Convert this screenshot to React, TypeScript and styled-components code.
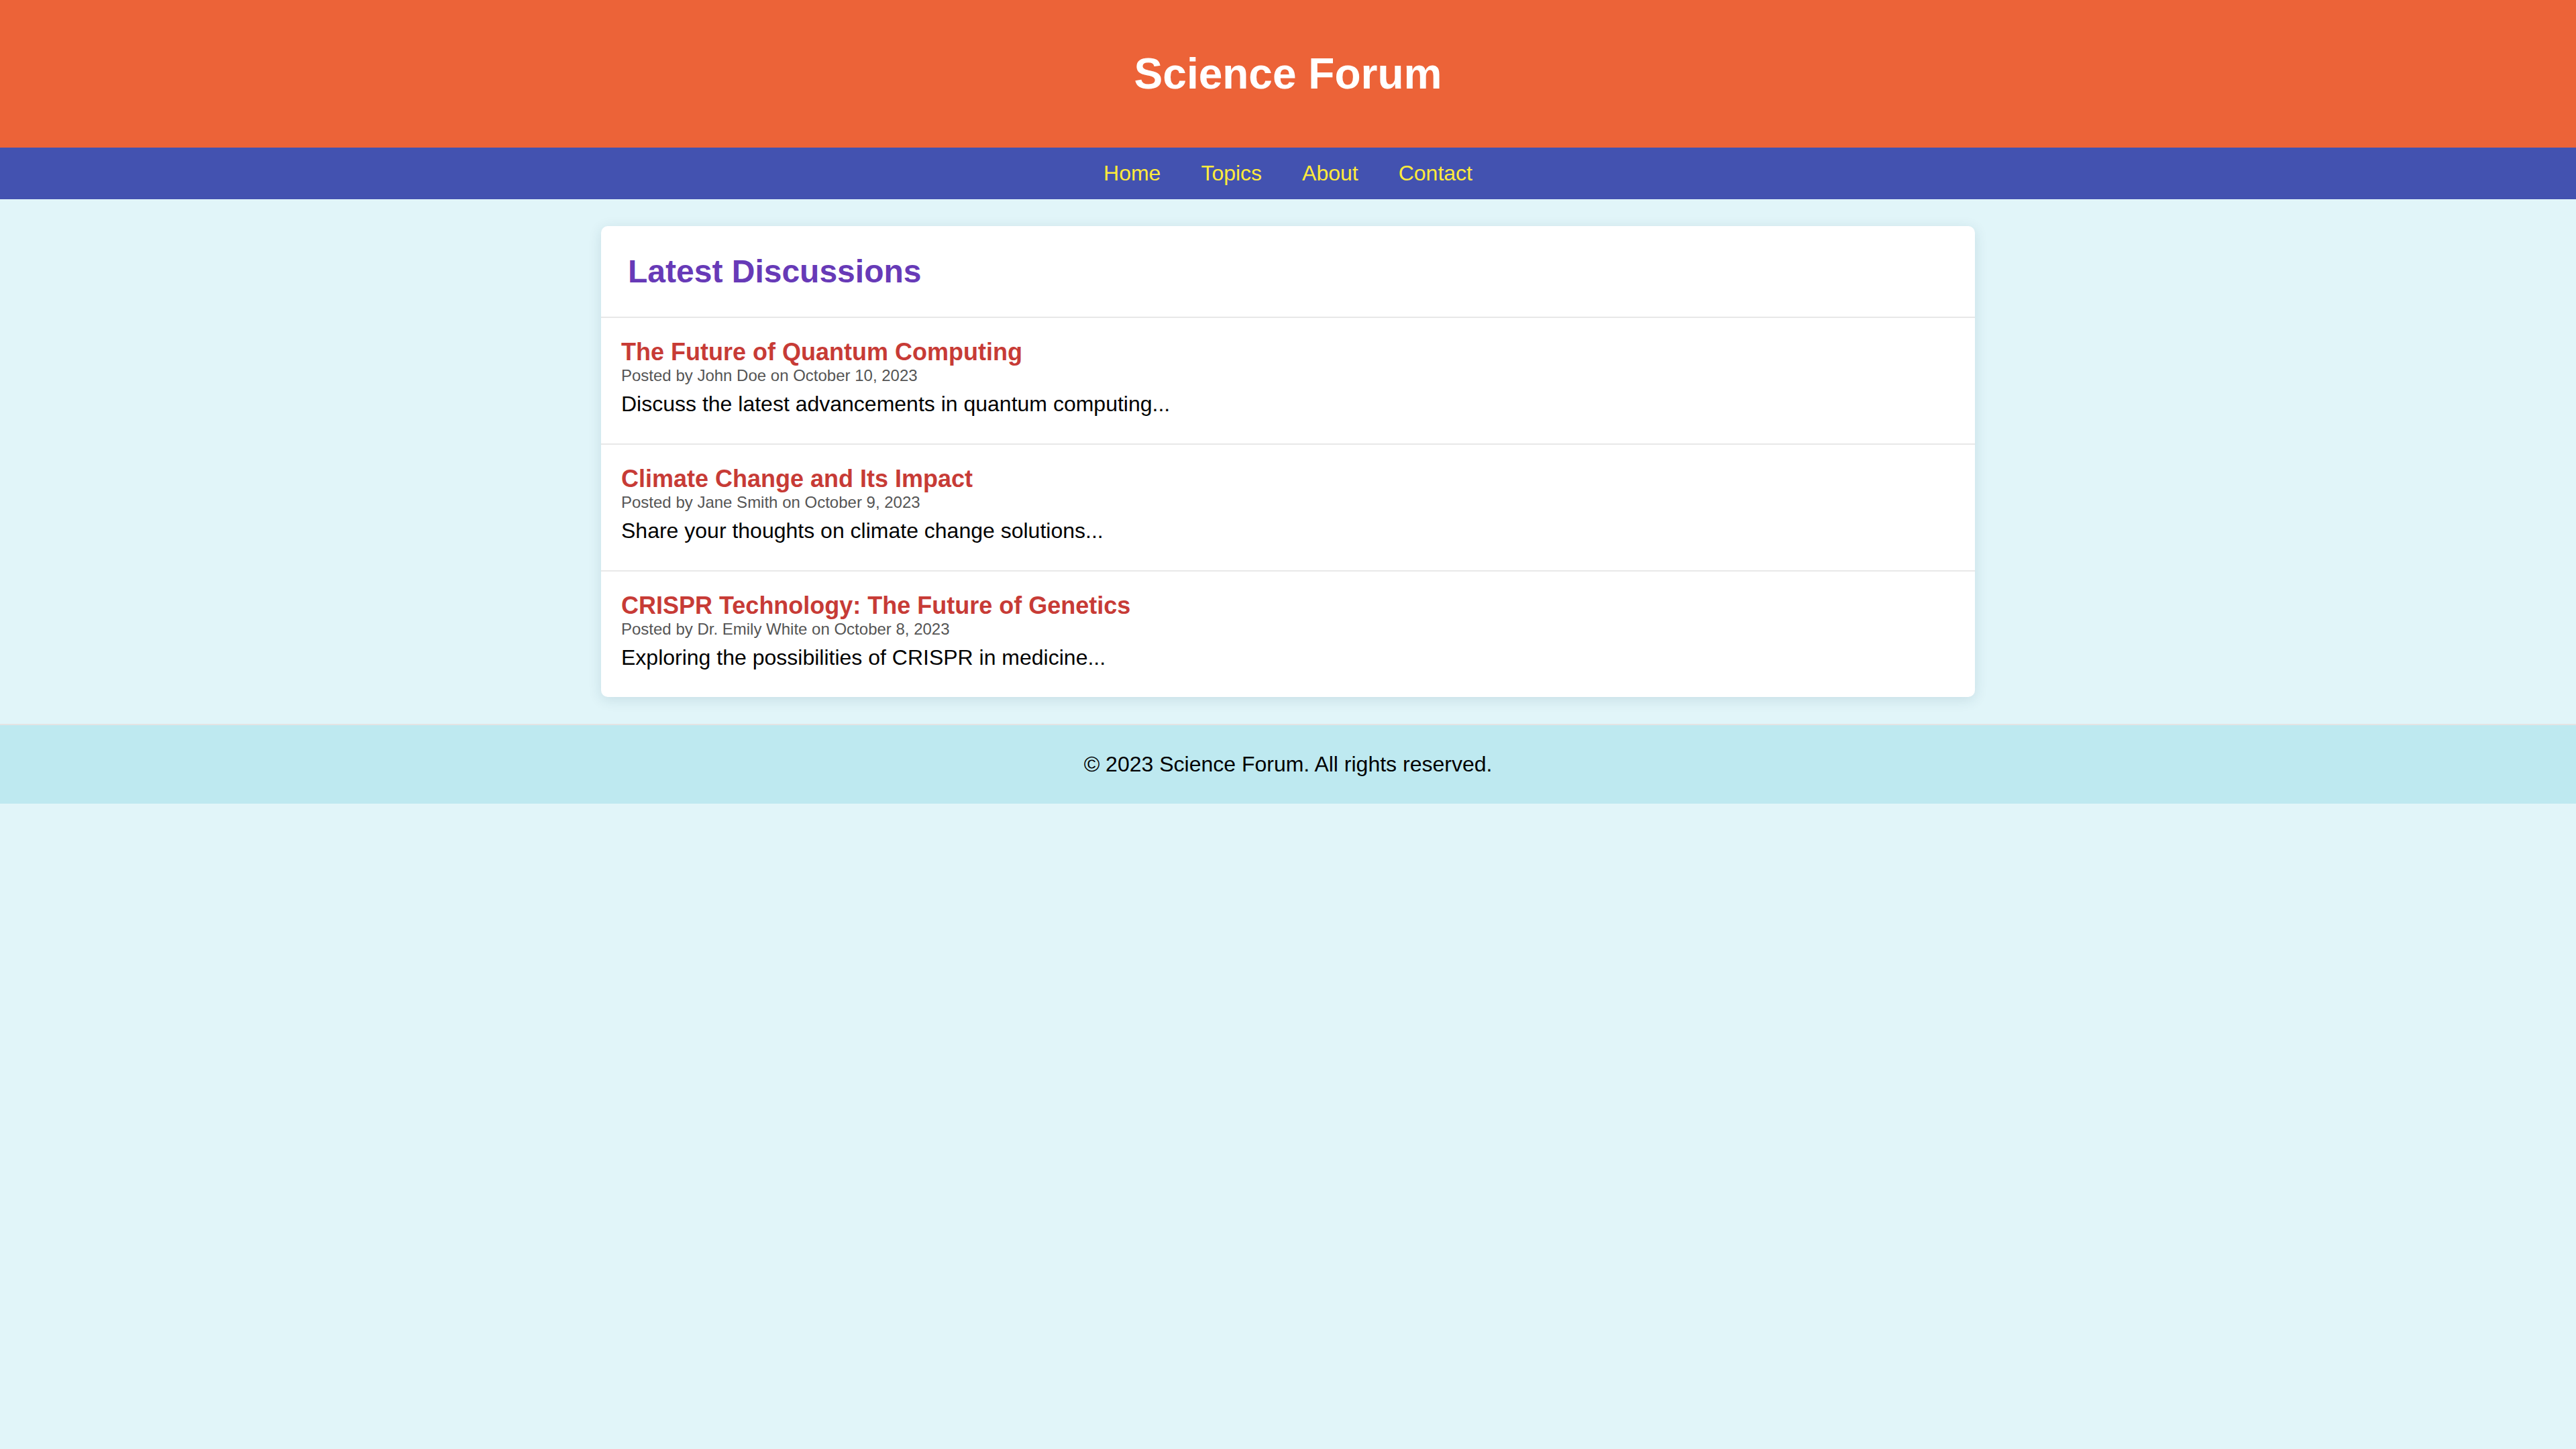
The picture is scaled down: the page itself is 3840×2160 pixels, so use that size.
import React from "react";
import styled, { createGlobalStyle } from "styled-components";

const GlobalStyle = createGlobalStyle`
  html, body {
    margin: 0;
    padding: 0;
    background: #e1f5f9;
    font-family: "Liberation Sans", Arial, Helvetica, sans-serif;
    color: #000;
  }
  body {
    min-height: 100vh;
  }
  * {
    box-sizing: border-box;
  }
`;

const Page = styled.div`
  display: flex;
  flex-direction: column;
  min-height: 100vh;
  background: #e1f5f9;
`;

const Header = styled.header`
  background: #ec6338;
  padding: 73.2px 0;
  text-align: center;
`;

const SiteTitle = styled.h1`
  margin: 0;
  font-size: 64px;
  font-weight: 700;
  color: #ffffff;
  line-height: normal;
`;

const Nav = styled.nav`
  background: #4352b0;
  padding: 20px 0;
  display: flex;
  justify-content: center;
  gap: 60px;
`;

const NavLink = styled.a`
  color: #ffeb3b;
  font-size: 32px;
  line-height: normal;
  text-decoration: none;
`;

const Main = styled.main`
  padding: 40px 0;
  display: flex;
  justify-content: center;
`;

const Card = styled.section`
  width: 2048px;
  background: #ffffff;
  border-radius: 10px;
  box-shadow: 0 4px 20px rgba(0, 60, 80, 0.12);
  overflow: hidden;
`;

const CardHeader = styled.div`
  padding: 40px;
  border-bottom: 2px solid #e8e8e8;
`;

const CardTitle = styled.h2`
  margin: 0;
  font-size: 48px;
  font-weight: 700;
  color: #673ab7;
  line-height: normal;
`;

const Post = styled.article<{ $last?: boolean }>`
  padding: 30px;
  border-bottom: ${(p) => (p.$last ? "none" : "2px solid #e8e8e8")};
`;

const PostTitle = styled.h3`
  margin: 0;
  font-size: 36px;
  font-weight: 700;
  color: #c73b36;
  line-height: normal;
`;

const Meta = styled.div`
  font-size: 24px;
  color: #555555;
  line-height: normal;
`;

const Excerpt = styled.p`
  margin: 10px 0;
  font-size: 32px;
  color: #000000;
  line-height: normal;
`;

const Footer = styled.footer`
  background: #bee9f0;
  border-top: 2px solid #e4e4e4;
  padding: 40px 0;
  text-align: center;
  font-size: 32px;
  line-height: normal;
  color: #000;
`;

const posts = [
  {
    title: "The Future of Quantum Computing",
    author: "John Doe",
    date: "October 10, 2023",
    excerpt: "Discuss the latest advancements in quantum computing...",
  },
  {
    title: "Climate Change and Its Impact",
    author: "Jane Smith",
    date: "October 9, 2023",
    excerpt: "Share your thoughts on climate change solutions...",
  },
  {
    title: "CRISPR Technology: The Future of Genetics",
    author: "Dr. Emily White",
    date: "October 8, 2023",
    excerpt: "Exploring the possibilities of CRISPR in medicine...",
  },
];

export default function App() {
  return (
    <>
      <GlobalStyle />
      <Page>
        <Header>
          <SiteTitle>Science Forum</SiteTitle>
        </Header>
        <Nav>
          <NavLink href="#">Home</NavLink>
          <NavLink href="#">Topics</NavLink>
          <NavLink href="#">About</NavLink>
          <NavLink href="#">Contact</NavLink>
        </Nav>
        <Main>
          <Card>
            <CardHeader>
              <CardTitle>Latest Discussions</CardTitle>
            </CardHeader>
            {posts.map((p, i) => (
              <Post key={p.title} $last={i === posts.length - 1}>
                <PostTitle>{p.title}</PostTitle>
                <Meta>
                  Posted by {p.author} on {p.date}
                </Meta>
                <Excerpt>{p.excerpt}</Excerpt>
              </Post>
            ))}
          </Card>
        </Main>
        <Footer>© 2023 Science Forum. All rights reserved.</Footer>
      </Page>
    </>
  );
}
